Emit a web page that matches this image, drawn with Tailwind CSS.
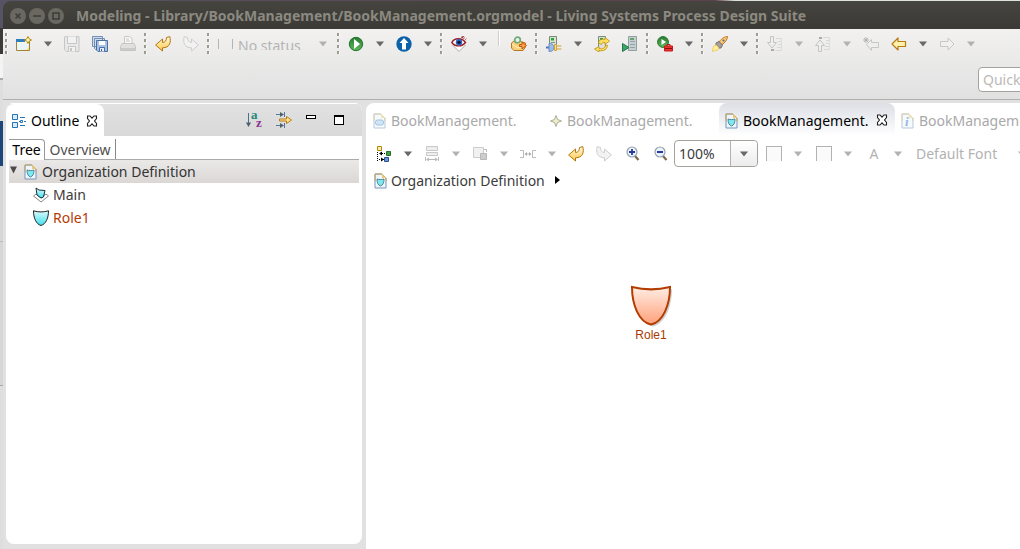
<!DOCTYPE html>
<html lang="en">
<head>
<meta charset="utf-8">
<title>Modeling - Living Systems Process Design Suite</title>
<script src="https://cdn.jsdelivr.net/npm/@tailwindcss/browser@4"></script>
</head>
<body class="h-screen overflow-hidden bg-[#e1e1e1] font-['Noto_Sans',sans-serif] text-[14px] leading-5 text-[#3c3c3c]">
<svg class="absolute size-0" aria-hidden="true">
  <defs>
    <linearGradient id="gold" x1="0" y1="0" x2="0" y2="1"><stop offset="0" stop-color="#fffbe0"/><stop offset="1" stop-color="#ffc84a"/></linearGradient>
    <linearGradient id="cyan" x1="0" y1="0" x2="0" y2="1"><stop offset="0" stop-color="#dcfafa"/><stop offset="1" stop-color="#3fe0f2"/></linearGradient>
    <linearGradient id="peach" x1="0" y1="0" x2="0" y2="1"><stop offset="0" stop-color="#ffede4"/><stop offset="1" stop-color="#ffa07a"/></linearGradient>
    <linearGradient id="green" x1="0" y1="0" x2="0" y2="1"><stop offset="0" stop-color="#2c7a34"/><stop offset="1" stop-color="#5fb858"/></linearGradient>
  </defs>
  <symbol id="arrow" viewBox="0 0 8 6"><path d="M0 .5h8L4 5.500z" fill="#686868"/></symbol>
  <symbol id="arrow-off" viewBox="0 0 8 6"><path d="M0 .5h8L4 5.500z" fill="#b2b2b2"/></symbol>
  <symbol id="new" viewBox="0 0 16 16"><path d="M.5 3.500h13v11H.5z" fill="#fff8d8" stroke="#a08530"/><path d="M1 7h12v7H1z" fill="#e9f4fb"/><path d="M7 14c4 0 6-2 6-6v6z" fill="#fbe28c"/><path d="M0 3h9v3H0z" fill="#2f7fc0"/><path d="M12 .5l1.200 2.300L15.500 4l-2.300 1.200L12 7.500l-1.200-2.300L8.500 4l2.300-1.200z" fill="#fff4b8" stroke="#b98a12"/></symbol>
  <symbol id="save" viewBox="0 0 16 16"><path d="M1 .5h14v15H2.500l-2-2V1z" fill="#e8e8e8" stroke="#c6c6c6"/><path d="M3.500.500v7h9v-7M4.500 15.500v-5h7v5" fill="#f2f2f2" stroke="#c6c6c6"/><path d="M6 12h2v3H6z" fill="#c6c6c6"/></symbol>
  <symbol id="saveall" viewBox="0 0 16 16"><path d="M.5.500h10v10H.5zM2.500 2.500h10v11h-9l-1-1z" fill="#cfdcec" stroke="#7290b4"/><path d="M4.500 4.500h11v11H6L4.500 14z" fill="#a9c2e2" stroke="#4a70a4"/><path d="M7 5h6v4H7z" fill="#fff"/><path d="M7.500 15.500v-4h5v4" fill="#e5edf7" stroke="#4a70a4"/><path d="M9 13h1v2H9z" fill="#3f669b"/></symbol>
  <symbol id="print" viewBox="0 0 16 16"><path d="M4.500 7V.500h5l2.500 2V7" fill="#f7f7f7" stroke="#c8c8c8"/><path d="M6 3h3M6 5h4" stroke="#c8c8c8"/><path d="M2 7.500h12l1.500 3v4H.5v-4z" fill="#e0e0e0" stroke="#c4c4c4"/><path d="M1 12h14v2H1z" fill="#cbcbcb"/></symbol>
  <symbol id="undo" viewBox="0 0 16 16"><path d="M.6 9L7.500 3v3.500C10 6.500 11.500 4.500 11.500 1.500L14.800.600C16.200 6 15 11.800 7.500 11.800V15z" fill="url(#gold)" stroke="#b5760d" stroke-linejoin="round"/></symbol>
  <symbol id="redo" viewBox="0 0 16 16"><path d="M15.400 9L8.500 3v3.500C6 6.500 4.500 4.500 4.500 1.500L1.200.600C-.2 6 1 11.800 8.500 11.800V15z" fill="#f2f2f2" stroke="#cecece" stroke-linejoin="round"/></symbol>
  <symbol id="run" viewBox="0 0 16 16"><circle cx="8" cy="8" r="6.700" fill="url(#green)" stroke="#23742d"/><path d="M6 3L12 8 6 13z" fill="#fff"/></symbol>
  <symbol id="up" viewBox="0 0 16 16"><circle cx="8" cy="8" r="7.700" fill="#0b62a8"/><path d="M8 2l4.500 5H10v6.500H6V7H3.500z" fill="#fff"/></symbol>
  <symbol id="eye" viewBox="0 0 16 16"><path d="M1.500 9L8 15.500 14.500 9" fill="#fff" stroke="#aaa"/><path d="M.8 6.500C3.500 1.500 11 1.500 14.500 6.500 11 11 4 11 .8 6.500z" fill="#fff" stroke="#9c1f24" stroke-width="1.400"/><circle cx="8" cy="6.300" r="3.200" fill="#2d62bd"/><circle cx="8" cy="6.300" r="1.600" fill="#08153a"/><path d="M10 1l1.500 1L13 0M12 3l2-1.500M14 4l1.500-1.500" stroke="#ca4249" stroke-width=".8"/></symbol>
  <symbol id="mail" viewBox="0 0 16 16"><path d="M.5 7L3 5h5l6.500 2v4L12 14.500H3L.5 12z" fill="#f9cf78" stroke="#bd7421"/><path d="M1 8l6 4 4-2" fill="none" stroke="#fff0bd"/><path d="M8.500 8.500H11V6l4.500 3.500L11 13v-2.500H8.500z" fill="#f9a04c" stroke="#bb5a11"/><circle cx="6.500" cy="4" r="2.800" fill="#e6f5e4" stroke="#71a87b" stroke-width="1.700"/></symbol>
  <symbol id="srv-plug" viewBox="0 0 16 16"><path d="M3.500.500h7v12h-7z" fill="#dde1d8" stroke="#7b8a75"/><path d="M5 6.500h4" stroke="#80948a"/><path d="M5 2h3v2.500H5z" fill="#22aa35"/><path d="M0 11.500h3" stroke="#4777b9" stroke-width="2"/><path d="M3 7.500c4 0 5 2 5 4s-1 4-5 4z" fill="#9dbbe9" stroke="#6a8cc4"/><path d="M8.500 8.500h2v6h-2zM11 10h4.500M11 13h4.500" fill="#ffe07d" stroke="#d0a53a"/></symbol>
  <symbol id="srv-sync" viewBox="0 0 16 16"><path d="M4.500.500h7v13h-7z" fill="#dde1d8" stroke="#7b8a75"/><path d="M6 2h3v2H6z" fill="#22aa35"/><path d="M4.500 7c0-3 3-4.500 6.500-3.500V1.500L15.500 5 11 8.500v-2c-2-.5-3 0-3.500 2zM11.500 9c0 3-3 4.500-6.500 3.500v-2L.5 13 5 16v-1.500c4 1 8-.5 8.500-5z" fill="#ffe05c" stroke="#b78e17" stroke-width=".8"/></symbol>
  <symbol id="srv-run" viewBox="0 0 16 16"><path d="M6.500.500h8v14h-8z" fill="#c6cfd4" stroke="#93a09c"/><path d="M8 5.500h5M8 8.500h5M8 11.500h5" stroke="#93a3a5"/><path d="M8 2h4v2H8z" fill="#66a572"/><path d="M.5 7.500L7 11.500.5 15.500z" fill="#3ca566" stroke="#21794a"/></symbol>
  <symbol id="runext" viewBox="0 0 16 16"><circle cx="6" cy="6" r="5.400" fill="url(#green)" stroke="#23742d"/><path d="M4.500 3L9 6l-4.500 3z" fill="#fff"/><path d="M10 10V8.500h3V10" fill="none" stroke="#b01818"/><path d="M7.500 10h8v5h-8z" fill="#ee3030" stroke="#c51b1b"/><path d="M8 12.500h7" stroke="#851010"/></symbol>
  <symbol id="rocket" viewBox="0 0 16 16"><path d="M7 6C10 2 13 .5 15.500.500c0 2.500-2 6-6 8.500z" fill="#ffc66b" stroke="#b8782a"/><circle cx="11.500" cy="4.500" r="1" fill="#426b9a"/><path d="M4 7l3-1.500L10.500 9 9 12 6.500 12 4 9.500z" fill="#a5a0a0" stroke="#78706c"/><path d="M4 9l3 3-2 3-1-1-3.500 1.500L1 12l1-2z" fill="#fff3a0" stroke="#f4bc45" stroke-width=".7"/></symbol>
  <symbol id="nextann" viewBox="0 0 16 16"><path d="M3.500.500h3v6h3L5 12 .5 6.500h3z" fill="#eee" stroke="#c4c4c4"/><path d="M9 2.500h6M11 5.500h3M11 8.500h3M10 11.500h4M8 14.500h7" stroke="#d8d8d8"/><path d="M14.500 2v13" stroke="#ddd"/><path d="M4 13h3v2H4z" fill="#aaa"/></symbol>
  <symbol id="prevann" viewBox="0 0 16 16"><path d="M3.500 15.500h3v-6h3L5 4 .5 9.500h3z" fill="#eee" stroke="#c4c4c4"/><path d="M8 1.500h7M11 4.500h3M11 7.500h3M10 10.500h4M9 13.500h6" stroke="#d8d8d8"/><path d="M14.500 1v13" stroke="#ddd"/><path d="M4 1h3v2H4z" fill="#aaa"/></symbol>
  <symbol id="lastedit" viewBox="0 0 16 16"><path d="M3.500 8.500L8.500 3.500v3h7v5h-7v3z" fill="#eee" stroke="#c6c6c6"/><path d="M3 1v6M0 4h6M1 2l4 4M5 2L1 6" stroke="#a9a9a9" stroke-width=".8"/></symbol>
  <symbol id="back" viewBox="0 0 16 16"><path d="M1 8l6-6v3.500h7.500v5H7V14z" fill="#fff0ad" stroke="#b57c14" stroke-width="1.200" stroke-linejoin="round"/></symbol>
  <symbol id="fwd" viewBox="0 0 16 16"><path d="M15 8L9 2v3.500H1.500v5H9V14z" fill="#f0f0f0" stroke="#c6c6c6" stroke-linejoin="round"/></symbol>
  <symbol id="outline" viewBox="0 0 14 16"><path d="M.5 1.500h5v5h-5zM.5 9.500h5v5h-5z" fill="#d8ecfa" stroke="#2a73b3"/><path d="M8 4.500h5M8 12.500h5M7 8.500h1M12 8.500h2" stroke="#2a73b3"/><path d="M8.500 7.500h2v2h-2z" fill="#fff" stroke="#2a73b3"/></symbol>
  <symbol id="close" viewBox="0 0 12 12"><path d="M1.500 1h2.500L6 3.200 8 1h2.500v2.500L8.500 6l2 2.500V11H8L6 8.800 4 11H1.500V8.500l2-2.500-2-2.500z" fill="#fff" stroke="#222" stroke-width="1.100"/></symbol>
  <symbol id="sort" viewBox="0 0 16 16"><path d="M2.500 1v12" stroke="#48708f"/><path d="M0 10.500h5L2.500 15z" fill="#4b6070"/><text x="5" y="7" font-family="Liberation Serif, serif" font-weight="bold" font-size="13" fill="#25857b">a</text><text x="10" y="15" font-family="Liberation Serif, serif" font-weight="bold" font-size="13" fill="#8d3591">z</text></symbol>
  <symbol id="filter" viewBox="0 0 16 16"><path d="M0 2.500h5M0 13.500h5M8.500 0v5M8.500 11v5M3 8h1" stroke="#52789c"/><path d="M4 0l4 2.500L4 5zM4 11l4 2.500L4 16z" fill="#52616f"/><path d="M3.500 7h7V4.500l5 3.500-5 3.500V9h-7z" fill="#ffe28a" stroke="#b97d16"/></symbol>
  <symbol id="page" viewBox="0 0 13 16"><path d="M1 1h7l4 4v10H1z" fill="#edf6fc" stroke="#7894ba"/><path d="M1 8V1h7l4 4v3" fill="none" stroke="#c6a95e"/><path d="M8 1v4h4z" fill="#eac978"/></symbol>
  <symbol id="orgpage" viewBox="0 0 13 16"><use href="#page"/><path d="M3 6c2 .8 5 .8 7 0 0 4-1 6-3.500 7C4 12 3 10 3 6z" fill="#7fe9f2" stroke="#3b6d80" stroke-width=".8"/></symbol>
  <symbol id="procpage" viewBox="0 0 13 16"><use href="#page"/><rect x="2.500" y="7" width="8" height="5" rx="2" fill="#a3cdf2" stroke="#4d86c1"/></symbol>
  <symbol id="infopage" viewBox="0 0 13 16"><use href="#page"/><text x="4" y="13" font-family="Liberation Serif, serif" font-weight="bold" font-style="italic" font-size="13" fill="#2d70c8">i</text></symbol>
  <symbol id="star" viewBox="0 0 13 16"><path d="M7 2.500l1.500 4 4 1.500-4 1.500-1.500 4-1.500-4-4-1.500 4-1.500z" fill="#e6e8b4" stroke="#8c8c6a"/></symbol>
  <symbol id="main" viewBox="0 0 16 16"><path d="M.5 9L3 7l5 4 5-4 2.500 2L8 15z" fill="#fff" stroke="#888"/><path d="M3 1l3 2 6 .5-1.500 6.500-2.500 1L4 8z" fill="url(#cyan)" stroke="#1d3038"/></symbol>
  <symbol id="shield" viewBox="0 0 16 16"><path d="M.5.800c5 1.500 10 1.500 15 0C15.500 8 13 14 8 15.500 3 14 .5 8 .5.800z" fill="url(#cyan)" stroke="#222"/></symbol>
  <symbol id="layout" viewBox="0 0 16 16"><path d="M1.500.500h4v4h-4z" fill="#fff2a7" stroke="#b78712"/><path d="M1.500 6v9M4 7.500h6M3 13.500h5" stroke="#000" stroke-dasharray="1 1"/><path d="M3 7.500l3-2v4zM8 13.500l-3-2v4z" fill="#000"/><path d="M10.500 5.500h4v4h-4z" fill="#459b43" stroke="#23752c"/><path d="M8.500 11.500h4v4h-4z" fill="#6897db" stroke="#2d5190"/></symbol>
  <symbol id="match" viewBox="0 0 16 16"><path d="M2.500.500h11v4h-11zM2.500 6.500h11v3h-11z" fill="#eee" stroke="#c8c8c8"/><path d="M1.500 11v4M14.500 11v4M3 13.500h10" stroke="#bbb"/><path d="M2 13.500l3-2v4zM14 13.500l-3-2v4z" fill="#bbb"/></symbol>
  <symbol id="order" viewBox="0 0 16 16"><path d="M1.500 1.500h10v10h-10z" fill="#f1f1f1" stroke="#ccc"/><path d="M8.500 7.500h6v6h-6z" fill="#ccc" stroke="#b8b8b8"/><path d="M12 3.500h2.500V6" fill="none" stroke="#bbb"/></symbol>
  <symbol id="space" viewBox="0 0 16 16"><path d="M0 4.500h3.500v7H0M16 4.500h-3.500v7H16M6 8h4" fill="none" stroke="#bbb"/><path d="M4.500 8L7 6v4zM11.500 8L9 6v4z" fill="#aaa"/></symbol>
  <symbol id="zoomin" viewBox="0 0 16 16"><path d="M11 10l3.500 4" stroke="#80684d" stroke-width="2.200"/><circle cx="8" cy="6" r="5" fill="#eaf2fc" stroke="#98a2ae" stroke-width="1.200"/><path d="M5 6h6M8 3v6" stroke="#2937a0" stroke-width="1.800"/></symbol>
  <symbol id="zoomout" viewBox="0 0 16 16"><path d="M11 10l3.500 4" stroke="#80684d" stroke-width="2.200"/><circle cx="8" cy="6" r="5" fill="#eaf2fc" stroke="#98a2ae" stroke-width="1.200"/><path d="M5 6h6" stroke="#2937a0" stroke-width="1.800"/></symbol>
  <symbol id="grip" viewBox="0 0 3 22"><path d="M0 0h2v3H0zM0 6h2v3H0zM0 12h2v3H0zM0 18h2v3H0z" fill="#9c9b91"/><path d="M2 1h1v2H2zM2 7h1v2H2zM2 13h1v2H2zM2 19h1v2H2z" fill="#fff"/></symbol>
</svg>

<div class="flex h-full">
  <!-- Desktop showing left of the window -->
  <div class="flex w-[3px] shrink-0 flex-col bg-[#d6d6d6]">
    <div class="h-7 bg-[#565364]"></div>
    <div class="h-[26px] bg-[#3c3b37]"></div>
    <div class="h-[25px] border-b border-[#aaa] bg-[#f4f4f4]"></div>
    <div class="h-[42px] border-t border-[#aaa] bg-[#dedede]"></div>
    <div class="h-[45px] bg-[#1d4779]"></div>
    <div class="h-[76px] border-b border-[#bbb]"></div>
    <div class="h-36 border-b border-[#aaa]"></div>
    <div class="grow bg-[#dedede]"></div>
  </div>

  <div class="flex min-w-0 grow flex-col">
    <header class="flex h-[29px] shrink-0 bg-linear-to-r from-[#565364] from-0% via-[#5b414b] via-70% to-[#dfe3e0] to-72% pt-px">
      <div class="flex grow items-center gap-[3px] rounded-tl-lg bg-linear-to-b from-[#45443f] to-[#3b3a36] pt-0.5 pl-[7px]">
        <button aria-label="Close window" class="size-4 rounded-full bg-[#6a6861]"><svg viewBox="0 0 16 16" class="size-4"><path d="M5.500 5.500l5 5m0-5l-5 5" stroke="#3c3b37" stroke-width="1.500"/></svg></button>
        <button aria-label="Minimize window" class="size-4 rounded-full bg-[#6a6861]"><svg viewBox="0 0 16 16" class="size-4"><path d="M4 8h8" stroke="#3c3b37" stroke-width="1.500"/></svg></button>
        <button aria-label="Maximize window" class="size-4 rounded-full bg-[#6a6861]"><svg viewBox="0 0 16 16" class="size-4"><path d="M5 5h6v6H5z" fill="none" stroke="#3c3b37" stroke-width="1.500"/></svg></button>
        <h1 class="ml-[9px] whitespace-nowrap text-[14px] font-bold text-[#8b8980]">Modeling - Library/BookManagement/BookManagement.orgmodel - Living Systems Process Design Suite</h1>
      </div>
    </header>

    <div class="h-[71px] shrink-0 overflow-hidden border-b border-[#afafaf] bg-linear-to-b from-[#f2f1f0] to-[#e1e1e1]">
      <div role="toolbar" aria-label="Main toolbar" class="flex h-[30px] items-center">
        <svg class="mx-0.5 h-[22px] w-[3px] shrink-0"><use href="#grip"/></svg>
        <button aria-label="New" class="flex w-7 shrink-0 justify-center"><svg class="size-4"><use href="#new"/></svg></button>
        <button aria-label="New menu" class="flex w-5 shrink-0 justify-center"><svg class="h-1.5 w-2"><use href="#arrow"/></svg></button>
        <button aria-label="Save" disabled class="flex w-7 shrink-0 justify-center"><svg class="size-4"><use href="#save"/></svg></button>
        <button aria-label="Save all" class="flex w-7 shrink-0 justify-center"><svg class="size-4"><use href="#saveall"/></svg></button>
        <button aria-label="Print" disabled class="flex w-7 shrink-0 justify-center"><svg class="size-4"><use href="#print"/></svg></button>
        <svg class="mx-0.5 h-[22px] w-[3px] shrink-0"><use href="#grip"/></svg>
        <button aria-label="Undo" class="flex w-7 shrink-0 justify-center"><svg class="size-4"><use href="#undo"/></svg></button>
        <button aria-label="Redo" disabled class="flex w-7 shrink-0 justify-center"><svg class="size-4"><use href="#redo"/></svg></button>
        <svg class="mx-0.5 h-[22px] w-[3px] shrink-0"><use href="#grip"/></svg>
        <button disabled class="flex w-[123px] shrink-0 items-center pl-1.5 text-[#b4b4b4]">
          <span class="mr-[5px] h-2.5 w-[15px] border-x border-[#b4b4b4]"></span>
          <span class="h-[11px] w-[81px] overflow-hidden text-left text-[14px] leading-[14px]">No status</span>
          <svg class="h-1.5 w-2"><use href="#arrow-off"/></svg>
        </button>
        <svg class="mx-0.5 h-[22px] w-[3px] shrink-0"><use href="#grip"/></svg>
        <button aria-label="Run" class="flex w-7 shrink-0 justify-center"><svg class="size-4"><use href="#run"/></svg></button>
        <button aria-label="Run menu" class="flex w-5 shrink-0 justify-center"><svg class="h-1.5 w-2"><use href="#arrow"/></svg></button>
        <button aria-label="Upload" class="flex w-7 shrink-0 justify-center"><svg class="size-4"><use href="#up"/></svg></button>
        <button aria-label="Upload menu" class="flex w-5 shrink-0 justify-center"><svg class="h-1.5 w-2"><use href="#arrow"/></svg></button>
        <svg class="mx-0.5 h-[22px] w-[3px] shrink-0"><use href="#grip"/></svg>
        <button aria-label="View" class="flex w-7 shrink-0 justify-center"><svg class="size-4"><use href="#eye"/></svg></button>
        <button aria-label="View menu" class="flex w-5 shrink-0 justify-center"><svg class="h-1.5 w-2"><use href="#arrow"/></svg></button>
        <span class="mx-[5px] -mt-3 h-[15px] w-0.5 border-l border-[#ccc] bg-white"></span>
        <button aria-label="Send" class="flex w-7 shrink-0 justify-center"><svg class="size-4"><use href="#mail"/></svg></button>
        <svg class="mx-0.5 h-[22px] w-[3px] shrink-0"><use href="#grip"/></svg>
        <button aria-label="Connect server" class="flex w-7 shrink-0 justify-center"><svg class="size-4"><use href="#srv-plug"/></svg></button>
        <button aria-label="Connect menu" class="flex w-5 shrink-0 justify-center"><svg class="h-1.5 w-2"><use href="#arrow"/></svg></button>
        <button aria-label="Synchronize server" class="flex w-7 shrink-0 justify-center"><svg class="size-4"><use href="#srv-sync"/></svg></button>
        <button aria-label="Start server" class="flex w-7 shrink-0 justify-center"><svg class="size-4"><use href="#srv-run"/></svg></button>
        <svg class="mx-0.5 h-[22px] w-[3px] shrink-0"><use href="#grip"/></svg>
        <button aria-label="External tools" class="flex w-7 shrink-0 justify-center"><svg class="size-4"><use href="#runext"/></svg></button>
        <button aria-label="External tools menu" class="flex w-5 shrink-0 justify-center"><svg class="h-1.5 w-2"><use href="#arrow"/></svg></button>
        <svg class="mx-0.5 h-[22px] w-[3px] shrink-0"><use href="#grip"/></svg>
        <button aria-label="Launch" class="flex w-7 shrink-0 justify-center"><svg class="size-4"><use href="#rocket"/></svg></button>
        <button aria-label="Launch menu" class="flex w-5 shrink-0 justify-center"><svg class="h-1.5 w-2"><use href="#arrow"/></svg></button>
        <svg class="mx-0.5 h-[22px] w-[3px] shrink-0"><use href="#grip"/></svg>
        <button aria-label="Next annotation" disabled class="flex w-7 shrink-0 justify-center"><svg class="size-4"><use href="#nextann"/></svg></button>
        <button aria-label="Next annotation menu" disabled class="flex w-5 shrink-0 justify-center"><svg class="h-1.5 w-2"><use href="#arrow-off"/></svg></button>
        <button aria-label="Previous annotation" disabled class="flex w-7 shrink-0 justify-center"><svg class="size-4"><use href="#prevann"/></svg></button>
        <button aria-label="Previous annotation menu" disabled class="flex w-5 shrink-0 justify-center"><svg class="h-1.5 w-2"><use href="#arrow-off"/></svg></button>
        <button aria-label="Last edit location" disabled class="flex w-7 shrink-0 justify-center"><svg class="size-4"><use href="#lastedit"/></svg></button>
        <button aria-label="Back" class="flex w-7 shrink-0 justify-center"><svg class="size-4"><use href="#back"/></svg></button>
        <button aria-label="Back menu" class="flex w-5 shrink-0 justify-center"><svg class="h-1.5 w-2"><use href="#arrow"/></svg></button>
        <button aria-label="Forward" disabled class="flex w-7 shrink-0 justify-center"><svg class="size-4"><use href="#fwd"/></svg></button>
        <button aria-label="Forward menu" disabled class="flex w-5 shrink-0 justify-center"><svg class="h-1.5 w-2"><use href="#arrow-off"/></svg></button>
      </div>
      <div class="-mr-[108px] flex justify-end pt-2">
        <input aria-label="Quick Access" placeholder="Quick Access" class="h-[25px] w-[150px] rounded border border-[#a5a19c] bg-white px-1 text-[14px] placeholder:text-[#bdb9b6]">
      </div>
    </div>

    <main class="flex min-h-0 grow gap-1 pt-[3px] pl-[3px]">
      <section aria-label="Outline" class="mb-[5px] flex w-[356px] shrink-0 flex-col overflow-hidden rounded-lg bg-white">
        <div class="flex h-[33px] shrink-0 items-center border-t border-white bg-linear-to-b from-[#e1e1e1] to-[#d9d9d9]">
          <div class="flex h-full w-[98px] items-center rounded-t-lg bg-white pt-0.5 pl-1.5 text-black">
            <svg class="mr-[5px] h-4 w-3.5"><use href="#outline"/></svg>
            <h2 class="w-[50px]">Outline</h2>
            <button aria-label="Close Outline" class="ml-[5px]"><svg class="size-3"><use href="#close"/></svg></button>
          </div>
          <div class="ml-auto flex items-center gap-3.5 pr-[18px]">
            <button aria-label="Sort"><svg class="size-4"><use href="#sort"/></svg></button>
            <button aria-label="Filter"><svg class="size-4"><use href="#filter"/></svg></button>
            <button aria-label="Minimize" class="mr-1 mb-1.5 h-1 w-2.5 border border-black bg-white"></button>
            <button aria-label="Maximize" class="h-2.5 w-2.5 border border-t-2 border-black bg-white"></button>
          </div>
        </div>
        <div role="tablist" class="mx-[3px] mt-[3px] flex h-[21px] shrink-0 border-b border-[#aaa]">
          <button role="tab" aria-selected="true" class="-mb-px w-9 rounded-tr border-t border-r border-[#999] bg-white text-center text-black">Tree</button>
          <button role="tab" class="w-[71px] border-r border-[#888] pt-px text-center text-[#505050]">Overview</button>
        </div>
        <ul role="tree" class="mx-[3px]">
          <li role="treeitem" class="flex h-[23px] items-center bg-linear-to-b from-[#ebe9e8] to-[#dad7d5] text-[#333]">
            <svg class="mb-1 ml-px h-2 w-[7px]" viewBox="0 0 7 8"><path d="M0 .5h7L3.500 7.500z" fill="#4b4b4b"/></svg>
            <svg class="mr-[5px] ml-[7px] h-4 w-[13px]"><use href="#orgpage"/></svg>Organization Definition
          </li>
          <li role="treeitem" class="flex h-[23px] items-center pl-6"><svg class="mr-1 size-4"><use href="#main"/></svg>Main</li>
          <li role="treeitem" class="flex h-[23px] items-center pl-6 text-[#b33c05]"><svg class="mr-1 size-4"><use href="#shield"/></svg>Role1</li>
        </ul>
      </section>

      <section aria-label="Editor" class="flex min-w-0 grow flex-col overflow-hidden rounded-tl-lg bg-white">
        <div role="tablist" class="flex h-[33px] shrink-0 pl-px text-[#a9a9a9]">
          <button role="tab" class="flex w-44 shrink-0 items-center pt-0.5 pl-1.5"><svg class="mr-[5px] h-4 w-[13px] opacity-50"><use href="#procpage"/></svg>BookManagement.</button>
          <button role="tab" class="flex w-44 shrink-0 items-center pt-0.5 pl-1.5"><svg class="mr-[5px] h-4 w-[13px] opacity-70"><use href="#star"/></svg>BookManagement.</button>
          <div class="flex w-44 shrink-0 items-center rounded-t-lg bg-linear-to-b from-[#dddfe6] to-white pl-1.5 text-black">
            <button role="tab" aria-selected="true" class="flex w-[151px] items-center pt-0.5"><svg class="mr-[5px] h-4 w-[13px]"><use href="#orgpage"/></svg>BookManagement.</button>
            <button aria-label="Close editor"><svg class="size-3"><use href="#close"/></svg></button>
          </div>
          <button role="tab" class="flex w-44 shrink-0 items-center pt-0.5 pl-1.5"><svg class="mr-[5px] h-4 w-[13px] opacity-50"><use href="#infopage"/></svg>BookManagement.</button>
        </div>
        <div role="toolbar" aria-label="Editor toolbar" class="flex h-[35px] shrink-0 items-center pl-1 text-[#b2b2b2]">
          <button aria-label="Layout" class="flex w-7 shrink-0 justify-center"><svg class="size-4"><use href="#layout"/></svg></button>
          <button aria-label="Layout menu" class="flex w-5 shrink-0 justify-center"><svg class="h-1.5 w-2"><use href="#arrow"/></svg></button>
          <button aria-label="Match size" disabled class="flex w-7 shrink-0 justify-center"><svg class="size-4"><use href="#match"/></svg></button>
          <button aria-label="Match size menu" disabled class="flex w-5 shrink-0 justify-center"><svg class="h-1.5 w-2"><use href="#arrow-off"/></svg></button>
          <button aria-label="Order" disabled class="flex w-7 shrink-0 justify-center"><svg class="size-4"><use href="#order"/></svg></button>
          <button aria-label="Order menu" disabled class="flex w-5 shrink-0 justify-center"><svg class="h-1.5 w-2"><use href="#arrow-off"/></svg></button>
          <button aria-label="Spacing" disabled class="flex w-7 shrink-0 justify-center"><svg class="size-4"><use href="#space"/></svg></button>
          <button aria-label="Spacing menu" disabled class="flex w-5 shrink-0 justify-center"><svg class="h-1.5 w-2"><use href="#arrow-off"/></svg></button>
          <button aria-label="Undo" class="flex w-7 shrink-0 justify-center"><svg class="size-4"><use href="#undo"/></svg></button>
          <button aria-label="Redo" disabled class="flex w-7 shrink-0 justify-center"><svg class="size-4"><use href="#redo"/></svg></button>
          <button aria-label="Zoom in" class="flex w-7 shrink-0 justify-center"><svg class="size-4"><use href="#zoomin"/></svg></button>
          <button aria-label="Zoom out" class="flex w-7 shrink-0 justify-center"><svg class="size-4"><use href="#zoomout"/></svg></button>
          <div class="relative w-[84px] shrink-0">
            <select aria-label="Zoom level" class="block h-[27px] w-full appearance-none rounded border border-[#a5a19c] bg-white pl-1 text-[14px] text-[#3c3c3c]"><option>100%</option></select>
            <span class="pointer-events-none absolute inset-y-px right-px flex w-[27px] items-center justify-center rounded-r border-l border-[#b5b2ae] bg-linear-to-b from-white to-[#ececec]"><svg class="h-1.5 w-2"><use href="#arrow"/></svg></span>
          </div>
          <button aria-label="Fill color" disabled class="ml-0.5 flex w-7 shrink-0 justify-center"><span class="h-[15px] w-4 border border-b-0 border-[#b2b2b2] bg-[#fafafa]"></span></button>
          <button aria-label="Fill color menu" disabled class="flex w-5 shrink-0 justify-center"><svg class="h-1.5 w-2"><use href="#arrow-off"/></svg></button>
          <button aria-label="Line color" disabled class="ml-0.5 flex w-7 shrink-0 justify-center"><span class="h-[15px] w-4 border border-b-0 border-[#b2b2b2] bg-[#fafafa]"></span></button>
          <button aria-label="Line color menu" disabled class="flex w-5 shrink-0 justify-center"><svg class="h-1.5 w-2"><use href="#arrow-off"/></svg></button>
          <button disabled class="ml-0.5 w-7 shrink-0 text-center">A</button>
          <button aria-label="Font color menu" disabled class="flex w-5 shrink-0 justify-center"><svg class="h-1.5 w-2"><use href="#arrow-off"/></svg></button>
          <button disabled class="ml-2 flex w-[110px] shrink-0 items-center justify-between">Default Font<svg class="h-1.5 w-2"><use href="#arrow-off"/></svg></button>
        </div>
        <nav aria-label="Breadcrumb" class="flex h-5 shrink-0 items-center pl-2">
          <a href="#" class="flex items-center"><svg class="mr-1 h-4 w-[13px]"><use href="#orgpage"/></svg>Organization Definition</a>
          <svg class="mb-0.5 ml-2.5 h-2 w-[5px]" viewBox="0 0 5 8"><path d="M0 0l5 4-5 4z" fill="#000"/></svg>
        </nav>
        <div class="relative grow">
          <figure class="absolute top-[93px] left-[263px] flex w-11 flex-col items-center">
            <svg class="h-[43px] w-11" viewBox="0 0 44 43">
              <path d="M5 5c12 3 26 3 38 0 0 18-7 35-19 37.500C12 40 5 23 5 5z" fill="#000" opacity=".18"/>
              <path d="M3 3c12 3 26 3 38 0 0 18-7 35-19 37.500C10 38 3 21 3 3z" fill="url(#peach)" stroke="#b33c00" stroke-width="2"/>
            </svg>
            <figcaption class="font-['Liberation_Sans',sans-serif] text-[12px] leading-4 text-[#a83800]">Role1</figcaption>
          </figure>
        </div>
      </section>
    </main>
  </div>
</div>
</body>
</html>
